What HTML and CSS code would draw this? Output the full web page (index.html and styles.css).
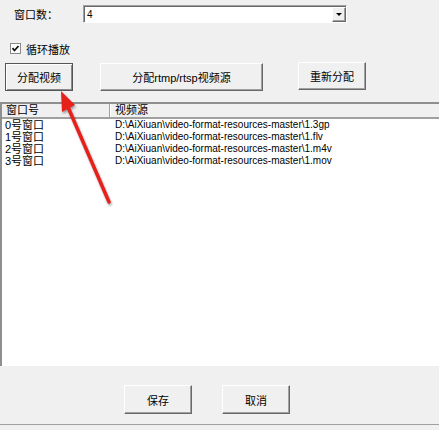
FILE: index.html
```html
<!DOCTYPE html>
<html lang="zh-CN">
<head>
    <meta charset="UTF-8">
    <title>分配视频</title>
    <link rel="stylesheet" href="styles.css">
</head>
<body>
    <div class="window">
        <div class="count-row">
            <span class="count-label">窗口数：</span>
            <div class="combo">
                <span class="combo-value">4</span>
                <span class="combo-btn"><span class="tri"></span></span>
            </div>
        </div>

        <div class="check-row">
            <svg class="checkbox" width="11" height="11" viewBox="0 0 11 11">
                <rect x="0.5" y="0.5" width="10" height="10" fill="#fff" stroke="#8a8a8a"/>
                <polyline points="2.5,5.2 4.5,7.5 8.5,3" fill="none" stroke="#111" stroke-width="1.8"/>
            </svg>
            <span>循环播放</span>
        </div>

        <div class="btn-row">
            <button class="btn btn-default btn-small">分配视频</button>
            <button class="btn btn-wide">分配rtmp/rtsp视频源</button>
            <button class="btn btn-small btn-up">重新分配</button>
        </div>

        <div class="list">
            <div class="list-head">
                <div class="col-1">窗口号</div>
                <div class="col-2">视频源</div>
            </div>
            <div class="list-body">
                <div class="row"><div class="cell-1">0号窗口</div><div class="cell-2">D:\AiXiuan\video-format-resources-master\1.3gp</div></div>
                <div class="row"><div class="cell-1">1号窗口</div><div class="cell-2">D:\AiXiuan\video-format-resources-master\1.flv</div></div>
                <div class="row"><div class="cell-1">2号窗口</div><div class="cell-2">D:\AiXiuan\video-format-resources-master\1.m4v</div></div>
                <div class="row"><div class="cell-1">3号窗口</div><div class="cell-2">D:\AiXiuan\video-format-resources-master\1.mov</div></div>
            </div>
        </div>

        <div class="footer">
            <button class="btn btn-small btn-tall">保存</button>
            <button class="btn btn-small btn-tall">取消</button>
        </div>
        <div class="status"></div>

        <svg class="arrow" width="439" height="430" viewBox="0 0 439 430">
            <line x1="109" y1="202" x2="68" y2="107" stroke="#e8201a" stroke-width="3.5" stroke-linecap="round"/>
            <polygon points="61,91 75,105 62,112" fill="#e8201a"/>
        </svg>
    </div>
</body>
</html>
```

FILE: styles.css
```css
body {
    margin: 0;
    background-color: #f0f0f0;
    font-family: "Liberation Sans", "Noto Sans CJK SC", sans-serif;
    font-size: 11px;
    color: #000;
}

.window {
    position: relative;
    width: 439px;
    height: 430px;
    overflow: hidden;
}

.count-row {
    display: flex;
    align-items: center;
    height: 18px;
    padding-top: 5px;
    padding-left: 14px;
}

.count-label {
    width: 69px;
}

.combo {
    display: flex;
    align-items: center;
    justify-content: space-between;
    width: 264px;
    height: 18px;
    box-sizing: border-box;
    background-color: #fff;
    border: 1px solid;
    border-color: #a0a0a0 #fff #fff #a0a0a0;
    box-shadow: inset 1px 1px #696969;
}

.combo-value {
    padding-left: 3px;
    font-size: 10px;
}

.combo-btn {
    display: flex;
    align-items: center;
    justify-content: center;
    width: 14px;
    height: 15px;
    box-sizing: border-box;
    background-color: #f0f0f0;
    border: 1px solid;
    border-color: #fff #696969 #696969 #fff;
    box-shadow: inset -1px -1px #a0a0a0;
}

.tri {
    width: 0;
    height: 0;
    border-left: 3px solid transparent;
    border-right: 3px solid transparent;
    border-top: 3px solid #000;
}

.check-row {
    display: flex;
    align-items: center;
    gap: 5px;
    margin-top: 19px;
    padding-left: 10px;
    height: 13px;
}

.btn-row {
    display: flex;
    align-items: flex-start;
    margin-top: 8px;
    padding-left: 5px;
    height: 29px;
}

.btn {
    display: flex;
    align-items: center;
    justify-content: center;
    padding: 0;
    box-sizing: border-box;
    background-color: #f0f0f0;
    border: 1px solid;
    border-color: #fff #696969 #696969 #fff;
    box-shadow: inset -1px -1px #a0a0a0;
    font-family: "Liberation Sans", "Noto Sans CJK SC", sans-serif;
    font-size: 11px;
    color: #000;
}

.btn-small {
    width: 68px;
    height: 28px;
}

.btn-wide {
    width: 163px;
    height: 28px;
    margin-left: 27px;
}

.btn-up {
    margin-left: 35px;
    margin-top: -1px;
}

.btn-default {
    border-color: #555;
    box-shadow: inset 1px 1px #fff, inset -1px -1px #8a8a8a;
}

.list {
    margin-top: 10px;
    width: 460px;
    height: 264px;
    box-sizing: border-box;
    background-color: #fff;
    border-top: 2px solid #8f8f8f;
    border-left: 2px solid #8f8f8f;
}

.list-head {
    display: flex;
    height: 13px;
    background-color: #f0f0f0;
    border-bottom: 2px solid #a0a0a0;
    line-height: 13px;
    font-size: 11px;
}

.col-1 {
    width: 103px;
    padding-left: 4px;
    border-right: 1px solid #a0a0a0;
    box-shadow: 1px 0 #fff;
}

.col-2 {
    padding-left: 5px;
}

.row {
    display: flex;
    height: 12px;
    line-height: 12px;
}

.cell-1 {
    width: 104px;
    padding-left: 3px;
    font-size: 11px;
}

.cell-2 {
    padding-left: 6px;
    font-size: 10px;
}

.footer {
    display: flex;
    gap: 30px;
    padding-left: 124px;
    margin-top: 19px;
    height: 39px;
}

.btn-tall {
    height: 29px;
}

.status {
    border-top: 1px solid #a0a0a0;
    height: 6px;
}

.arrow {
    position: absolute;
    left: 0;
    top: 0;
    pointer-events: none;
    filter: drop-shadow(1px 2px 1px rgba(0, 0, 0, 0.35));
}
```
